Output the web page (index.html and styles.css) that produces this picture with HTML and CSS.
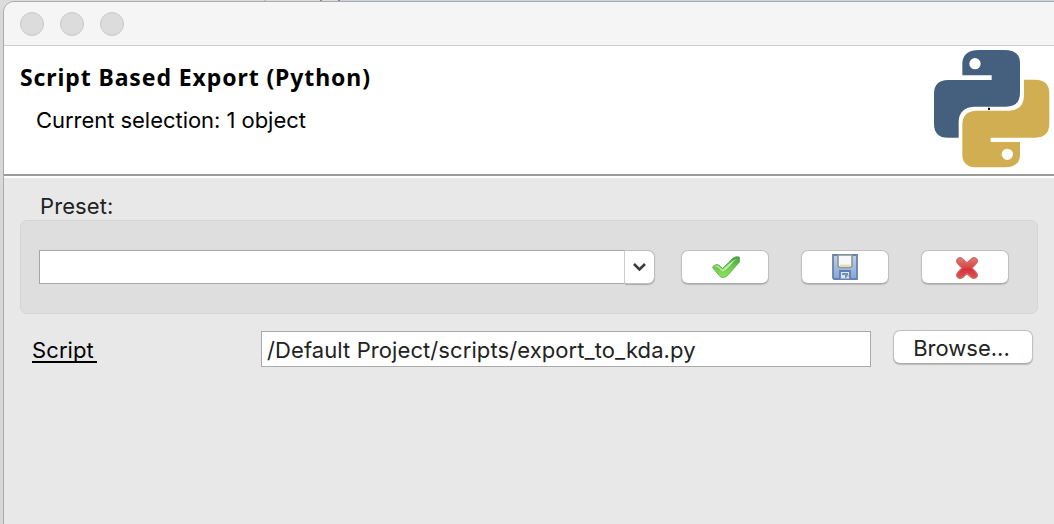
FILE: index.html
```html
<!DOCTYPE html>
<html lang="en">
<head>
<meta charset="utf-8">
<title>Script Based Export (Python)</title>
<link rel="stylesheet" href="styles.css">
</head>
<body>
<div class="backdrop"><i class="tab-a"></i><i class="tab-b"></i><i class="tab-c"></i><i class="tab-d"></i></div>
<main class="window">
  <div class="titlebar"><span class="light"></span><span class="light"></span><span class="light"></span></div>
  <header class="header">
    <div class="heading">
      <h1 class="title"><span>Script Based Export (Python)</span></h1>
      <p class="subtitle"><span>Current selection: 1 object</span></p>
    </div>
    <svg class="logo" viewBox="0 0 390 420">
      <path fill="#45607f" fill-rule="evenodd" d="M115 106V68Q118 30 165 30H240Q288 30 288 68V158Q288 200 246 200H150Q104 203 104 247V293H72Q30 293 30 251V162Q30 120 72 120H203V106ZM170 71a17 17 0 1 0-34 0a17 17 0 1 0 34 0Z"/>
      <path fill="#d0ae51" fill-rule="evenodd" transform="rotate(180 203 206)" d="M118 106V68Q118 30 165 30H245Q291 30 291 68V158Q291 200 246 200H150Q106 203 106 245V293H72Q30 293 30 251V162Q30 119 72 119H206V106ZM173 69a17 17 0 1 0-34 0a17 17 0 1 0 34 0Z"/>
      <path fill="#111" d="M192 203h6v7h-6z"/>
    </svg>
  </header>
  <section class="content">
    <div class="preset-label"><span>Preset:</span></div>
    <div class="group">
      <div class="combo"><div class="combo-field"></div><div class="combo-arrow"><svg width="14" height="10" viewBox="0 0 14 10"><path d="M1 2L6.500 7.500L12 2" fill="none" stroke="#3b3b3b" stroke-width="2.600"/></svg></div></div>
      <div class="button">
        <svg class="check" width="30" height="26" viewBox="0 0 30 26"><defs><linearGradient id="g" x2="0" y2="1"><stop offset="0" stop-color="#3f9a3c"/><stop offset=".45" stop-color="#6cc64c"/><stop offset="1" stop-color="#8fe55a"/></linearGradient></defs><path d="M1.500 13.500Q2 11 6 10.500Q9 11 11.500 14.500L22 4Q25 2 28.500 3V8L17 21Q13 25 9 22.500Z" fill="url(#g)" stroke="#6db65b"/><path d="M3.500 13Q6 11.500 8.500 14.500L11.500 17.500Q17 15 23 7L27 4.500Q23 5 19 9L11.500 16L8 12.500Q5 10.500 3.500 13Z" fill="#c4ecb4"/></svg>
      </div>
      <div class="button">
        <svg width="28" height="28" viewBox="0 0 28 28"><defs><linearGradient id="b" x2="0" y2="1"><stop offset="0" stop-color="#c3d0df"/><stop offset="1" stop-color="#86a6d8"/></linearGradient></defs><path d="M2 2H26V26H3L2 25Z" fill="url(#b)" stroke="#6482b0" stroke-width="1.800"/><path d="M7 2V12Q7 14.500 9 14.500H19Q21 14.500 21 12V2Z" fill="#f6f8fa" stroke="#8b9894" stroke-width="1.600"/><path d="M9 12.500H19" stroke="#ecd6a0" stroke-width="1.600"/><path d="M9 25.500V18H19V25.500" fill="#d7e4f2" stroke="#5f7eb0" stroke-width="1.800"/><path d="M11 20h6v2l-2 3h-1v-3h-3z" fill="#7190bb"/><path d="M16 24l2-3v3z" fill="#e3c36f"/></svg>
      </div>
      <div class="button">
        <svg class="cross" width="24" height="24" viewBox="0 0 24 24"><defs><linearGradient id="r" x2="0" y2="1"><stop offset="0" stop-color="#d88073"/><stop offset=".45" stop-color="#d84a4a"/><stop offset=".55" stop-color="#d73038"/><stop offset="1" stop-color="#de5458"/></linearGradient></defs><path d="M5 1.500Q7 1.500 12 7Q17 1.500 19 1.500Q22.500 2 22.500 5.500Q22 7 17 12Q22 17 22.500 19Q22 22 19 22.500Q17 22.500 12 17.500Q7 22.500 5 22.500Q2 22 1.500 19Q2 17 7 12Q2 7 1.500 5.500Q2 2 5 1.500Z" fill="url(#r)" stroke="#cb6a62" stroke-width="1.200"/></svg>
      </div>
    </div>
    <div class="script-row">
      <div class="script-label"><span>Script</span></div>
      <div class="field"><span>/Default Project/scripts/export_to_kda.py</span></div>
      <div class="button browse"><span>Browse...</span></div>
    </div>
  </section>
</main>
</body>
</html>
```
FILE: styles.css
```css
* { box-sizing: border-box; }
body { margin: 0; width: 1054px; height: 524px; overflow: hidden; background: #d8d8d8; font: 22px/26px Inter, "Liberation Sans", sans-serif; color: #222; padding: 1px 0 0 3px; }
.backdrop { position: absolute; left: 0; top: 0; width: 1054px; height: 10px; background: #dcdcdc; }
.backdrop i { position: absolute; top: 0; height: 2px; }
.tab-a { left: 264px; width: 2px; background: #c0c0c0; }
.tab-b { left: 320px; width: 2px; background: #888; }
.tab-c { left: 338px; width: 2px; background: #888; }
.tab-d { left: 340px; width: 714px; background: #cdd2e0; }
.window { position: relative; width: 1060px; height: 540px; border: 1px solid #ababab; border-radius: 11px 0 0; background: #e8e8e8; overflow: hidden; }
.titlebar { height: 44px; background: #f5f5f5; border-bottom: 1px solid #cfcfcf; display: flex; gap: 16px; padding: 10px 0 0 16px; }
.light { width: 24px; height: 24px; border-radius: 50%; background: #dcdcdc; border: 1px solid #c8c8c8; }
.header { height: 132px; width: 1050px; background: #fff; border-bottom: 2px solid #fff; box-shadow: inset 0 -2px #9b9b9b; display: flex; justify-content: space-between; }
.heading { padding: 17px 0 0 16px; color: #000; }
.title { margin: 0; font: bold 23px/28px "Noto Sans", sans-serif; letter-spacing: .9px; white-space: nowrap; }
.subtitle { margin: 16px 0 0 16px; letter-spacing: -.04px; }
.logo { width: 130px; height: 140px; margin: -6px 0 -10px; flex: none; }
.content { padding: 15px 0 0 16px; width: 1050px; }
.preset-label { padding-left: 20px; height: 27px; letter-spacing: .1px; }
.group { height: 94px; width: 1018px; background: #dedede; border: 1px solid #d5d5d5; border-radius: 7px; display: flex; gap: 32px; padding: 29px 0 0 18px; }
.combo { display: flex; width: 616px; height: 34px; margin-right: -6px; }
.combo-field { flex: 1; background: #fff; border: 1px solid #a6a6a6; border-right-color: #d0d0d0; }
.combo-arrow { width: 30px; background: #fff; border: 1px solid #bdbdbd; border-left: 0; border-radius: 0 7px 7px 0; box-shadow: 0 1px 1px #aaa; display: flex; align-items: center; justify-content: center; }
.button { width: 88px; height: 34px; background: #fff; border: 1px solid #c0c0c0; border-bottom-color: #aaa; border-radius: 7px; box-shadow: 0 1px 1px #bbb; display: flex; align-items: center; justify-content: center; }
.check { margin-left: 2px; }
.cross { margin: 1px 0 0 4px; }
.script-row { display: flex; padding-top: 16px; }
.script-label { width: 241px; padding: 7px 0 0 12px; color: #000; }
.script-label span { display: block; width: 65px; height: 26px; border-bottom: 2px solid #000; letter-spacing: .1px; }
.field { width: 610px; height: 36px; margin-top: 1px; border: 1px solid #aaa; background: #fff; padding: 5px 0 0 5px; white-space: nowrap; letter-spacing: .09px; }
.browse { width: 140px; margin-left: 22px; padding: 2px 3px 0 0; }
```
